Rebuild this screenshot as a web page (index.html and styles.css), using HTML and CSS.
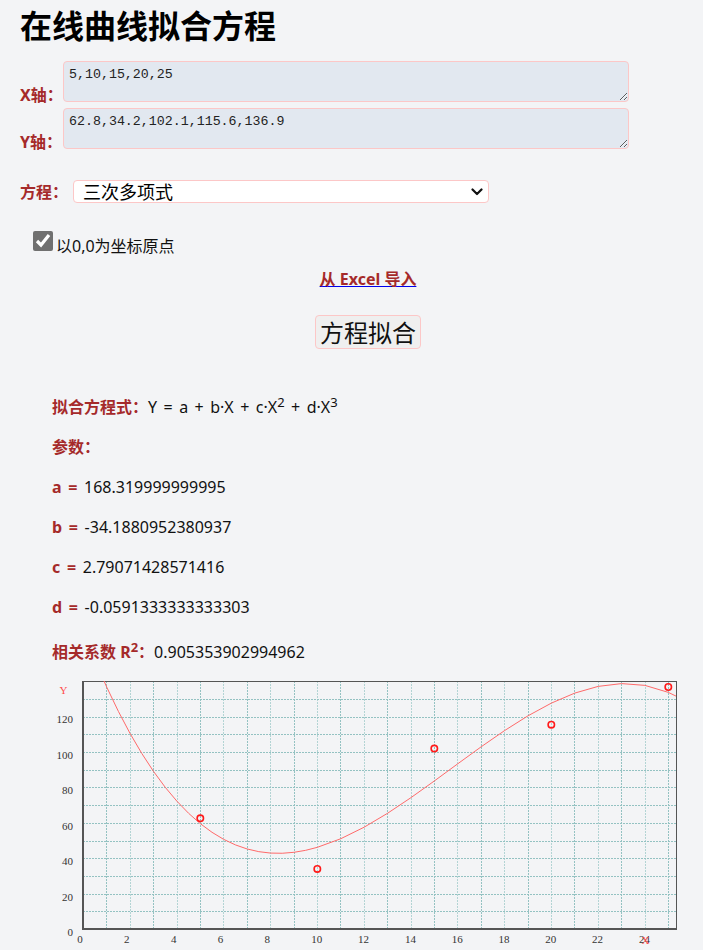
FILE: index.html
```html
<!DOCTYPE html>
<html lang="zh">
<head>
<meta charset="utf-8">
<title>在线曲线拟合方程</title>
<link rel="stylesheet" href="styles.css">
</head>
<body>
<h1 class="title">在线曲线拟合方程</h1>
<div class="field-row">
  <label class="field-label">X轴：</label>
  <textarea class="data-input">5,10,15,20,25</textarea>
</div>
<div class="field-row second">
  <label class="field-label">Y轴：</label>
  <textarea class="data-input">62.8,34.2,102.1,115.6,136.9</textarea>
</div>
<div class="select-row">
  <label class="field-label wide">方程：</label>
  <div class="select-wrap">
    <select class="eq-select"><option>三次多项式</option></select>
    <svg class="chevron" width="12" height="8" viewBox="0 0 12 8"><path d="M1.5 1.5 L6 6 L10.5 1.5"/></svg>
  </div>
</div>
<div class="check-row">
  <input type="checkbox" class="origin-check" checked>
  <span class="check-label">以0,0为坐标原点</span>
</div>
<div class="center-block import-row"><a class="import" href="#"><span>从 Excel 导入</span></a></div>
<div class="center-block button-row"><button class="fit-btn">方程拟合</button></div>
<div class="results">
  <p><b>拟合方程式：</b><span class="eq">Y = a + b·X + c·X<sup>2</sup> + d·X<sup>3</sup></span></p>
  <p><b>参数：</b></p>
  <p><b>a = </b>168.319999999995</p>
  <p><b>b = </b>-34.1880952380937</p>
  <p><b>c = </b>2.79071428571416</p>
  <p><b>d = </b>-0.0591333333333303</p>
  <p class="r2"><b>相关系数 R<sup>2</sup>：</b>0.905353902994962</p>
</div>
<svg class="chart" width="660" height="290" viewBox="0 0 660 290">
  <defs><clipPath id="plot"><rect x="43" y="11" width="593" height="248"/></clipPath></defs>
  <g class="grid">
    <line x1="66.5" y1="11" x2="66.5" y2="259"/><line class="minor" x1="90.5" y1="11" x2="90.5" y2="259"/>
    <line x1="113.5" y1="11" x2="113.5" y2="259"/><line class="minor" x1="137.5" y1="11" x2="137.5" y2="259"/>
    <line x1="160.5" y1="11" x2="160.5" y2="259"/><line class="minor" x1="183.5" y1="11" x2="183.5" y2="259"/>
    <line x1="207.5" y1="11" x2="207.5" y2="259"/><line class="minor" x1="230.5" y1="11" x2="230.5" y2="259"/>
    <line x1="254.5" y1="11" x2="254.5" y2="259"/><line class="minor" x1="277.5" y1="11" x2="277.5" y2="259"/>
    <line x1="300.5" y1="11" x2="300.5" y2="259"/><line class="minor" x1="324.5" y1="11" x2="324.5" y2="259"/>
    <line x1="347.5" y1="11" x2="347.5" y2="259"/><line class="minor" x1="371.5" y1="11" x2="371.5" y2="259"/>
    <line x1="394.5" y1="11" x2="394.5" y2="259"/><line class="minor" x1="417.5" y1="11" x2="417.5" y2="259"/>
    <line x1="441.5" y1="11" x2="441.5" y2="259"/><line class="minor" x1="464.5" y1="11" x2="464.5" y2="259"/>
    <line x1="488.5" y1="11" x2="488.5" y2="259"/><line class="minor" x1="511.5" y1="11" x2="511.5" y2="259"/>
    <line x1="534.5" y1="11" x2="534.5" y2="259"/><line class="minor" x1="558.5" y1="11" x2="558.5" y2="259"/>
    <line x1="581.5" y1="11" x2="581.5" y2="259"/><line class="minor" x1="605.5" y1="11" x2="605.5" y2="259"/>
    <line x1="628.5" y1="11" x2="628.5" y2="259"/>
    <line x1="43" y1="241.5" x2="636" y2="241.5"/><line x1="43" y1="224.5" x2="636" y2="224.5"/>
    <line x1="43" y1="206.5" x2="636" y2="206.5"/><line x1="43" y1="188.5" x2="636" y2="188.5"/>
    <line x1="43" y1="171.5" x2="636" y2="171.5"/><line x1="43" y1="153.5" x2="636" y2="153.5"/>
    <line x1="43" y1="135.5" x2="636" y2="135.5"/><line x1="43" y1="117.5" x2="636" y2="117.5"/>
    <line x1="43" y1="100.5" x2="636" y2="100.5"/><line x1="43" y1="82.5" x2="636" y2="82.5"/>
    <line x1="43" y1="64.5" x2="636" y2="64.5"/><line x1="43" y1="47.5" x2="636" y2="47.5"/>
    <line x1="43" y1="29.5" x2="636" y2="29.5"/>
  </g>
  <g class="frame">
    <line x1="43" y1="11.5" x2="636.5" y2="11.5"/>
    <line x1="636.5" y1="11" x2="636.5" y2="260"/>
  </g>
  <g class="axis">
    <line x1="43" y1="11" x2="43" y2="260"/>
    <line x1="42" y1="259" x2="637" y2="259"/>
  </g>
  <g clip-path="url(#plot)">
    <polyline class="curve" transform="translate(43.3 259.5) scale(23.4 -1.7714)" points="0,168.32 0.5,151.92 1,136.86 1.5,123.12 2,110.63 2.5,99.37 3,89.28 3.5,80.31 4,72.44 4.5,65.60 5,59.76 5.5,54.87 6,50.88 6.5,47.77 7,45.47 7.5,43.94 8,43.15 8.5,43.04 9,43.57 9.5,44.69 10,46.38 11,51.22 12,57.74 13,65.59 14,74.41 15,83.84 16,93.52 17,103.12 18,112.26 19,120.60 20,127.78 21,133.44 22,137.24 23,138.82 24,137.82 25,133.86 25.5,130.67"/>
  </g>
  <g class="points">
    <circle cx="160.3" cy="148.3" r="3.2"/>
    <circle cx="277.3" cy="198.9" r="3.2"/>
    <circle cx="394.3" cy="78.6" r="3.2"/>
    <circle cx="511.3" cy="54.7" r="3.2"/>
    <circle cx="628.3" cy="17" r="3.2"/>
  </g>
  <g class="ylabels">
    <text x="33" y="266">0</text>
    <text x="33" y="230.6">20</text>
    <text x="33" y="195.1">40</text>
    <text x="33" y="159.7">60</text>
    <text x="33" y="124.3">80</text>
    <text x="33" y="88.9">100</text>
    <text x="33" y="53.4">120</text>
  </g>
  <g class="xlabels">
    <text x="37.3" y="273">0</text>
    <text x="84.1" y="273">2</text>
    <text x="130.9" y="273">4</text>
    <text x="177.7" y="273">6</text>
    <text x="224.5" y="273">8</text>
    <text x="271.3" y="273">10</text>
    <text x="318.1" y="273">12</text>
    <text x="364.9" y="273">14</text>
    <text x="411.7" y="273">16</text>
    <text x="458.5" y="273">18</text>
    <text x="505.3" y="273">20</text>
    <text x="552.1" y="273">22</text>
    <text x="598.9" y="273">24</text>
  </g>
  <text class="axis-name" x="19.5" y="24">Y</text>
  <text class="axis-name" x="601.5" y="273.5">X</text>
</svg>
</body>
</html>
```

FILE: styles.css
```css
html, body {
  margin: 0;
  padding: 0;
}
body {
  background: #f3f4f6;
  padding: 0 20px;
  font-family: "Noto Sans", "Noto Sans CJK SC", sans-serif;
  color: #111;
  font-size: 16px;
}
.title {
  margin: 7px 0 0;
  font-size: 32px;
  line-height: 38px;
  font-weight: 700;
  font-family: "Noto Sans", "Noto Sans CJK SC", sans-serif;
  color: #000;
}
.field-row {
  display: flex;
  align-items: flex-end;
  margin-top: 16px;
}
.field-row.second {
  margin-top: 6px;
}
.field-label {
  width: 43px;
  flex-shrink: 0;
  white-space: nowrap;
  font-weight: 700;
  font-size: 16px;
  line-height: 14px;
  color: #a52a2a;
}
.field-label.wide {
  width: 53px;
  line-height: 20px;
}
.data-input {
  box-sizing: border-box;
  width: 566px;
  height: 41px;
  margin: 0;
  padding: 5px 5px;
  border: 1px solid #fcc7c7;
  border-radius: 4px;
  background: #e2e8f0;
  font-family: "Liberation Mono", monospace;
  font-size: 13.3px;
  line-height: 16px;
  color: #222;
}
.select-row {
  display: flex;
  align-items: center;
  margin-top: 31px;
}
.select-wrap {
  position: relative;
  width: 416px;
  height: 23px;
}
.eq-select {
  appearance: none;
  -webkit-appearance: none;
  box-sizing: border-box;
  width: 416px;
  height: 23px;
  margin: 0;
  padding: 0 24px 0 9px;
  border: 1px solid #fcc7c7;
  border-radius: 4px;
  background: #fff;
  color: #000;
  font-family: "Noto Sans CJK SC", sans-serif;
  font-size: 18px;
  line-height: 21px;
}
.chevron {
  position: absolute;
  right: 6px;
  top: 8px;
  pointer-events: none;
}
.chevron path {
  fill: none;
  stroke: #111;
  stroke-width: 2.2;
  stroke-linecap: round;
  stroke-linejoin: round;
}
.check-row {
  display: flex;
  align-items: flex-start;
  margin-top: 28px;
  padding-left: 13px;
}
.origin-check {
  width: 20px;
  height: 20px;
  margin: 0;
  accent-color: #707070;
}
.check-label {
  margin: 5px 0 0 3px;
  font-size: 16px;
  line-height: 20px;
  color: #111;
}
.center-block {
  text-align: center;
  padding-left: 33px;
}
.import-row {
  margin-top: 13px;
  line-height: 20px;
}
.import {
  color: #0000ee;
  text-decoration: underline;
  font-weight: 700;
  font-size: 16px;
}
.import span {
  color: #a52a2a;
}
.button-row {
  margin-top: 26px;
}
.fit-btn {
  box-sizing: border-box;
  height: 34px;
  margin: 0;
  padding: 0 4px;
  border: 1px solid #fcc7c7;
  border-radius: 4px;
  background: #efefef;
  color: #111;
  font-family: "Noto Sans CJK SC", sans-serif;
  font-size: 24px;
  line-height: 30px;
}
.results {
  margin-top: 46px;
  padding-left: 32px;
  display: flex;
  flex-direction: column;
  gap: 16px;
}
.results p {
  margin: 0;
  line-height: 24px;
  font-size: 16px;
  color: #111;
  word-spacing: 2.5px;
}
.results b {
  color: #a52a2a;
  font-weight: 700;
}
.results .eq {
  word-spacing: 2.3px;
}
.results .r2 b {
  word-spacing: 0;
}
.results sup {
  line-height: 0;
  font-size: 13px;
}
.results .r2 {
  margin-top: 5px;
}
.chart {
  display: block;
  margin: 6px 0 0 20px;
  overflow: visible;
}
.grid line {
  stroke: #94c2c2;
  stroke-width: 1;
  stroke-dasharray: 2 1;
}
.grid line.minor {
  stroke: #b3d4d4;
}
.frame line {
  stroke: #555;
  stroke-width: 1;
}
.axis line {
  stroke: #555;
  stroke-width: 2;
}
.curve {
  fill: none;
  stroke: #ff6a6a;
  stroke-width: 1;
  vector-effect: non-scaling-stroke;
}
.points circle {
  fill: none;
  stroke: #ff1a1a;
  stroke-width: 1.6;
}
.ylabels text {
  text-anchor: end;
  font-family: "Liberation Serif", serif;
  font-size: 11px;
  fill: #333;
}
.xlabels text {
  font-family: "Liberation Serif", serif;
  font-size: 11px;
  fill: #333;
}
.axis-name {
  font-family: "Liberation Serif", serif;
  font-size: 11px;
  fill: #ff4a4a;
}
```
